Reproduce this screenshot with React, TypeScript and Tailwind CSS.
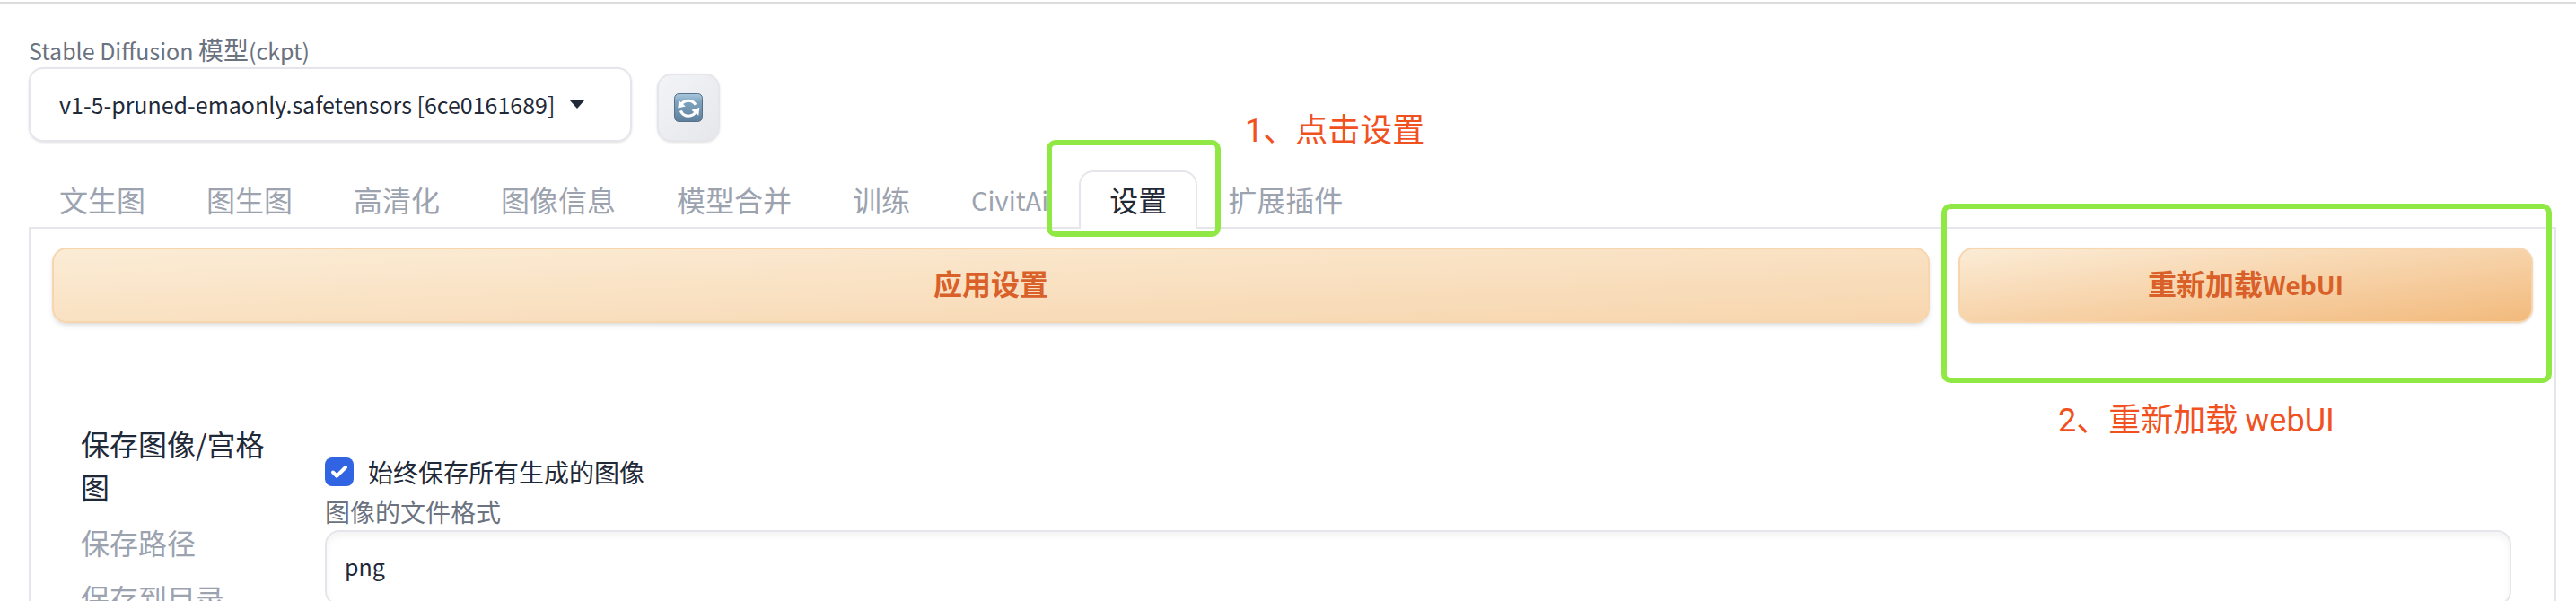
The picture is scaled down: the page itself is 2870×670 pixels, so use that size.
import React from "react";

const tabs = ["文生图", "图生图", "高清化", "图像信息", "模型合并", "训练", "CivitAi", "设置", "扩展插件"];
const sections = ["保存图像/宫格图", "保存路径", "保存到目录"];

function RefreshIcon() {
  return (
    <svg viewBox="0 0 32 32" className="size-8" aria-hidden="true">
      <defs>
        <linearGradient id="tile" x1="0" y1="0" x2="0" y2="1">
          <stop offset="0" stopColor="#a9c8de" />
          <stop offset="0.3" stopColor="#7fa3be" />
          <stop offset="1" stopColor="#5d7f9c" />
        </linearGradient>
      </defs>
      <rect x="0.5" y="0.5" width="31" height="31" rx="5" fill="url(#tile)" stroke="#56718a" />
      <path d="M7.800 13C9.400 9.900 12.400 8.200 16 8.200c3.400 0 6.300 1.600 8 4.600" fill="none" stroke="#fff" strokeWidth="3" />
      <path d="M5.200 8 4.400 16.600 12.800 14.600z" fill="#fff" />
      <path d="M7.300 19.400c1.600 3.700 4.800 5.800 8.700 5.800 3.400 0 6.400-1.500 8.200-4.600" fill="none" stroke="#fff" strokeWidth="3" />
      <path d="M28.400 15.800 27.200 24.800 19.400 18.800z" fill="#fff" />
    </svg>
  );
}

function Highlight({ className }: { className: string }) {
  return <span aria-hidden="true" className={`pointer-events-none absolute z-10 rounded-[10px] border-[6px] border-[#90e845] ${className}`} />;
}

function Tab({ name }: { name: string }) {
  const active = name === "设置";
  const latin = /^[A-Za-z]+$/.test(name);
  return (
    <button
      type="button"
      role="tab"
      aria-selected={active}
      className={`relative h-[65px] shrink-0 rounded-t-2xl border-2 border-b-0 px-8 pb-1 ${latin ? "text-[29px]" : "text-[32px]"} leading-[56px] ${
        active ? "border-[#e5e5eb] bg-white text-[#1f2937]" : "border-transparent text-[#9ca3af]"
      }`}
    >
      {name}
      {active && <Highlight className="-top-9 -right-7 -bottom-[9px] -left-[38px]" />}
    </button>
  );
}

export default function App() {
  return (
    <div className="h-screen overflow-hidden bg-white pt-0.5 font-['Noto_Sans_CJK_SC',sans-serif] text-[#1f2937]">
      <div className="border-t-2 border-[#dcdcde] pt-8 pr-[22px] pl-8">
        <header className="relative flex items-end gap-7">
          <div className="flex w-[672px] flex-col">
            <label htmlFor="model" className="h-[39px] text-[25px] leading-[38px] text-[#6b7280]">
              Stable Diffusion <span className="text-[28px]">模型</span>(ckpt)
            </label>
            <div className="flex h-[83px] items-center rounded-2xl border-2 border-[#e5e5eb] px-8 shadow-sm">
              <select id="model" className="appearance-none bg-transparent text-[25px]">
                <option>v1-5-pruned-emaonly.safetensors [6ce0161689]</option>
              </select>
              <svg viewBox="0 0 16 10" className="ml-4 h-2.5 w-4" aria-hidden="true">
                <path d="M0 0h16L8 9z" fill="#1f2937" />
              </svg>
            </div>
          </div>
          <button
            type="button"
            aria-label="刷新"
            className="flex h-[76px] w-[70px] items-center justify-center rounded-2xl border-2 border-[#e5e5eb] bg-linear-to-br from-[#f3f4f6] to-[#e5e7eb] shadow-sm"
          >
            <RefreshIcon />
          </button>
          <p className="absolute top-[82px] left-[1355px] text-[36px] leading-[48px] text-[#f1511f]">
            <span className="font-['Roboto',sans-serif]">1</span>、点击设置
          </p>
        </header>

        <nav role="tablist" className="mt-8 -mb-0.5 flex">
          {tabs.map((name) => (
            <Tab key={name} name={name} />
          ))}
        </nav>

        <main className="border-2 border-[#e5e5eb] px-6 pt-[21px] pb-6">
          <div className="flex gap-8">
            <button
              type="button"
              className="h-[84px] flex-1 rounded-2xl border-2 border-[#f7d5ad] bg-linear-to-br from-[#fbecd6] to-[#f7d6ae] pb-1.5 text-[32px] font-bold text-[#d96028] shadow-md"
            >
              应用设置
            </button>
            <button
              type="button"
              className="relative h-[84px] w-[640px] rounded-2xl border-2 border-[#f7d5ad] bg-linear-to-br from-[#fbecd6] to-[#f2ba7c] pb-1.5 text-[32px] font-bold text-[#d96028] shadow-sm"
            >
              重新加载<span className="text-[28px]">WebUI</span>
              <Highlight className="-top-[51px] -right-[23px] -bottom-[69px] -left-[21px]" />
              <span className="absolute top-[163px] left-[109px] text-[36px] leading-[48px] font-normal whitespace-nowrap text-[#f1511f]">
                <span className="font-['Roboto',sans-serif]">2</span>、重新加载 <span className="font-['Roboto',sans-serif]">webUI</span>
              </span>
            </button>
          </div>

          <div className="mt-[104px] flex px-6">
            <aside className="flex w-[280px] shrink-0 flex-col pr-12 pl-2">
              {sections.map((name, i) => (
                <button
                  key={name}
                  type="button"
                  className={`pt-1.5 pb-2 text-left text-[32px] leading-[48px] ${i === 0 ? "text-[#1f2937]" : "text-[#9ca3af]"}`}
                >
                  {name}
                </button>
              ))}
            </aside>
            <section className="flex flex-1 flex-col pt-10">
              <label className="flex items-center gap-4 text-[28px] leading-[44px]">
                <span className="grid size-8 place-items-center">
                  <input type="checkbox" defaultChecked className="col-start-1 row-start-1 size-8 appearance-none rounded-lg bg-[#3064e3]" />
                  <svg viewBox="0 0 32 32" className="pointer-events-none col-start-1 row-start-1 size-8" aria-hidden="true">
                    <path d="M9 16.500 13.300 20.700 23 11" fill="none" stroke="#fff" strokeWidth="4" strokeLinecap="round" strokeLinejoin="round" />
                  </svg>
                </span>
                始终保存所有生成的图像
              </label>
              <label htmlFor="format" className="h-[43px] text-[28px] leading-[44px] text-[#6b7280]">
                图像的文件格式
              </label>
              <input
                id="format"
                defaultValue="png"
                className="h-[84px] w-full rounded-2xl border-2 border-[#e5e5eb] px-5 pb-1 text-[25px] shadow-[inset_0_4px_8px_0_rgba(0,0,0,0.05)]"
              />
            </section>
          </div>
        </main>
      </div>
    </div>
  );
}
